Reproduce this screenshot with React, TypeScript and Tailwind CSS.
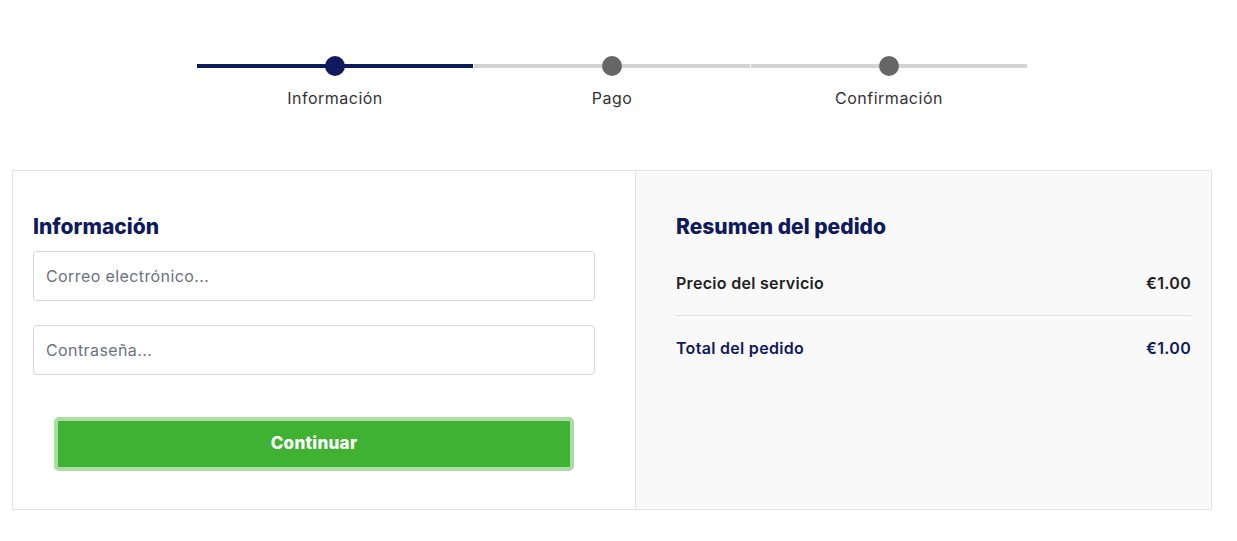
import { useState } from "react";

const STEPS = ["Información", "Pago", "Confirmación"];

export default function App() {
  const [email, setEmail] = useState("");
  const [password, setPassword] = useState("");
  const current = 0;

  return (
    <div className="min-h-screen bg-white font-['Inter','Liberation_Sans',sans-serif] pt-[54px]">
      {/* stepper */}
      <div className="ml-[197px] w-[830px] flex gap-px">
        {STEPS.map((s, i) => {
          const active = i <= current;
          return (
            <div key={s} className="flex-1 flex flex-col items-center">
              <div className="relative w-full h-[24px] flex items-center">
                <div className={`w-full h-[4px] ${active ? "bg-[#0f1a5c]" : "bg-[#d3d3d3]"}`} />
                <div
                  className={`absolute left-1/2 -translate-x-1/2 w-[20px] h-[20px] rounded-full ${
                    active ? "bg-[#0f1a5c]" : "bg-[#666666]"
                  }`}
                />
              </div>
              <div className="mt-[8px] text-[16px] text-[#333333] tracking-[0.5px]">{s}</div>
            </div>
          );
        })}
      </div>

      {/* card */}
      <div className="ml-[12px] mt-[60px] w-[1200px] h-[340px] border border-[#e3e3e3] flex">
        <div className="w-[623px] border-r border-[#e3e3e3] pl-[20px] pr-[40px] pt-[42px]">
          <h2 className="text-[21px] font-extrabold text-[#0f1a5c] leading-[27px]">Información</h2>
          <input
            value={email}
            onChange={(e) => setEmail(e.target.value)}
            placeholder="Correo electrónico..."
            className="mt-[11px] w-full h-[50px] border border-[#d1d5db] rounded-[4px] px-[12px] text-[16px] tracking-[0.4px] text-[#333] placeholder:text-[#6b7280] outline-none"
          />
          <input
            type="password"
            value={password}
            onChange={(e) => setPassword(e.target.value)}
            placeholder="Contraseña..."
            className="mt-[24px] w-full h-[50px] border border-[#d1d5db] rounded-[4px] px-[12px] text-[16px] tracking-[0.4px] text-[#333] placeholder:text-[#6b7280] outline-none"
          />
          <div className="mt-[42px] px-[21px]">
            <button className="w-full h-[54px] rounded-[5px] border-[4px] border-[#a9dda3] bg-[#3fb234] text-white font-extrabold text-[17px] tracking-[0.3px]">
              Continuar
            </button>
          </div>
        </div>

        <div className="flex-1 bg-[#f9f9f9] pl-[40px] pr-[20px] pt-[42px]">
          <h2 className="text-[21px] font-extrabold text-[#0f1a5c] leading-[27px]">Resumen del pedido</h2>
          <div className="mt-[31px] flex justify-between text-[16px] font-semibold tracking-[0.3px] text-[#222222]">
            <span>Precio del servicio</span>
            <span>€1.00</span>
          </div>
          <div className="mt-[20px] h-px bg-[#e0e0e0]" />
          <div className="mt-[20px] flex justify-between text-[16px] font-semibold tracking-[0.3px] text-[#0f1a5c]">
            <span>Total del pedido</span>
            <span>€1.00</span>
          </div>
        </div>
      </div>
    </div>
  );
}
